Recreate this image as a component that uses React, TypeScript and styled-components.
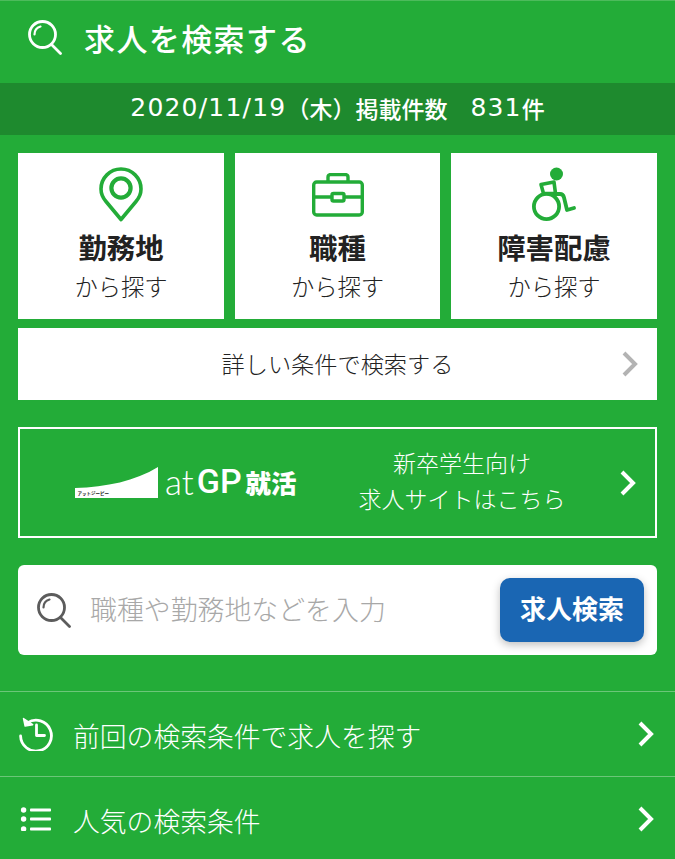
import React from 'react';
import styled, { createGlobalStyle } from 'styled-components';

const GlobalStyle = createGlobalStyle`
  html, body {
    margin: 0;
    padding: 0;
    background: #23ac38;
  }
  * {
    box-sizing: border-box;
  }
`;

const Page = styled.div`
  width: 675px;
  height: 859px;
  overflow: hidden;
  background: #23ac38;
  font-family: "Noto Sans CJK JP", "Noto Sans", sans-serif;
  color: #fff;
`;

const Header = styled.header`
  height: 83px;
  display: flex;
  align-items: center;
  gap: 21px;
  padding: 0 0 10px 27px;
  border-top: 1px solid #4dbb5c;
`;

const HeaderTitle = styled.h1`
  margin: 0;
  font-size: 31px;
  font-weight: 500;
  line-height: 1;
  letter-spacing: 1.4px;
`;

const DateBand = styled.div`
  height: 52px;
  padding-bottom: 3px;
  display: flex;
  align-items: center;
  justify-content: center;
  background: #1e8a2e;
  font-size: 23px;
  font-weight: 500;
  white-space: pre;
`;

const DateNum = styled.span`
  font-family: "DejaVu Sans", sans-serif;
  font-size: 25px;
  font-weight: 400;
  letter-spacing: 1.2px;
`;

const Main = styled.main`
  padding: 18px 18px 0;
`;

const CardRow = styled.div`
  display: grid;
  grid-template-columns: 206px 205px 206px;
  gap: 11px;
`;

const Card = styled.a`
  height: 166px;
  display: flex;
  flex-direction: column;
  align-items: center;
  padding-top: 14px;
  background: #fff;
  color: #222;
`;

const CardIcon = styled.div`
  height: 56px;
  display: flex;
  align-items: center;
  justify-content: center;
`;

const CardTitle = styled.div`
  margin-top: 4px;
  font-size: 28.4px;
  font-weight: 700;
  line-height: 40px;
`;

const CardSub = styled.div`
  font-size: 23.3px;
  font-weight: 300;
  line-height: 38px;
  color: #222;
`;

const DetailLink = styled.a`
  position: relative;
  height: 72px;
  margin-top: 9px;
  padding-bottom: 2px;
  display: flex;
  align-items: center;
  justify-content: center;
  background: #fff;
  color: #222;
  font-size: 23.2px;
  font-weight: 300;
`;

const Chevron = styled.svg<{ $right: number }>`
  position: absolute;
  right: ${({ $right }) => $right}px;
  top: 50%;
  transform: translateY(-50%);
`;

const Banner = styled.a`
  position: relative;
  height: 111px;
  margin-top: 27px;
  display: grid;
  grid-template-columns: 267px 240px;
  align-items: center;
  border: 2px solid #fff;
  padding-left: 55px;
`;

const Logo = styled.div`
  display: flex;
  align-items: flex-end;
  height: 32px;
  margin-bottom: 1px;
`;

const LogoAt = styled.span`
  margin-left: 7px;
  font-family: "Lato", sans-serif;
  font-size: 35px;
  font-weight: 300;
  line-height: 33px;
`;

const LogoGp = styled.span`
  margin-left: 3px;
  font-family: "Roboto", sans-serif;
  font-size: 34px;
  font-weight: 500;
  line-height: 33px;
`;

const LogoJa = styled.span`
  margin-left: 4px;
  font-size: 25.5px;
  font-weight: 900;
  line-height: 33px;
`;

const BannerText = styled.div`
  padding-bottom: 6px;
  text-align: center;
  font-size: 23px;
  font-weight: 300;
  line-height: 36px;
`;

const SearchBox = styled.form`
  height: 90px;
  margin-top: 27px;
  display: flex;
  align-items: center;
  padding: 0 13px 0 18px;
  background: #fff;
  border-radius: 6px;
`;

const Placeholder = styled.div`
  flex: 1;
  margin-left: 18px;
  padding-bottom: 4px;
  font-size: 26.9px;
  font-weight: 300;
  color: #a8a8a8;
  white-space: nowrap;
`;

const SearchButton = styled.button`
  width: 144px;
  height: 64px;
  padding: 0 0 5px;
  border: 0;
  border-radius: 10px;
  background: #1a66b3;
  color: #fff;
  font-family: inherit;
  font-size: 26px;
  font-weight: 700;
  box-shadow: 0 3px 8px rgba(0, 0, 0, 0.25);
`;

const MenuList = styled.nav`
  margin-top: 36px;
`;

const MenuItem = styled.a`
  position: relative;
  height: 85px;
  display: flex;
  align-items: center;
  gap: 17px;
  padding-left: 19px;
  border-top: 1px solid #6bc678;
  font-size: 26.8px;
  font-weight: 300;
`;

const MenuText = styled.span`
  padding-top: 2px;
`;

const MenuIcon = styled.div`
  width: 37px;
  display: flex;
`;

const SearchIcon = ({ color }: { color: string }) => (
  <svg width="36" height="36" viewBox="0 0 36 36" fill="none" stroke={color} strokeLinecap="round">
    <circle cx="15.5" cy="15.5" r="13" strokeWidth="2.8" />
    <path d="M7.5 15.5c0-4 2.5-7 6-8" strokeWidth="2.2" />
    <path d="M24.5 25.5l9 9" strokeWidth="2.8" />
  </svg>
);

const ChevronIcon = ({ color, right }: { color: string; right: number }) => (
  <Chevron $right={right} width="18" height="26" viewBox="0 0 18 26" fill="none" stroke={color} strokeWidth="4">
    <path d="M3 2l11 11L3 24" />
  </Chevron>
);

const PinIcon = () => (
  <svg width="44" height="56" viewBox="0 0 44 56" fill="none" stroke="#23ac38" strokeWidth="3.6">
    <path d="M22 52.5 7 34.5C3.8 30.8 2 26.8 2 22 2 11 11 2 22 2S42 11 42 22c0 4.8-1.8 8.8-5 12.5L22 52.5Z" strokeLinejoin="round" />
    <circle cx="22" cy="21" r="9.6" strokeWidth="4.2" />
  </svg>
);

const CaseIcon = () => (
  <svg width="52" height="44" viewBox="0 0 52 44" fill="none" stroke="#23ac38" strokeWidth="3.4" strokeLinejoin="round">
    <rect x="1.7" y="9" width="48.6" height="33" rx="3" />
    <path d="M16 9V4a2.4 2.4 0 0 1 2.4-2.4h15.2A2.4 2.4 0 0 1 36 4v5" />
    <path d="M1.7 24H20M32 24h18.3" />
    <rect x="20" y="20.5" width="12" height="7.5" rx="1.5" />
  </svg>
);

const WheelchairIcon = () => (
  <svg width="44" height="56" viewBox="0 0 44 56" fill="none" stroke="#23ac38" strokeLinecap="round" strokeLinejoin="round">
    <circle cx="24.5" cy="7" r="6.5" fill="#23ac38" stroke="none" />
    <path d="M9 17.5 22 15l1.5 11.5H11.5L9 17.5Z" strokeWidth="3.6" />
    <path d="M23.5 27H28c2.5 0 3.4 1 4 3.5L35 43l7-2" strokeWidth="3.8" />
    <circle cx="14.5" cy="39.5" r="12.6" strokeWidth="3.8" />
  </svg>
);

const HistoryIcon = () => (
  <svg width="35" height="34" viewBox="0 0 35 34" fill="none" stroke="#fff" strokeWidth="2.8" strokeLinecap="round" strokeLinejoin="round">
    <path d="M8.5 5.8A15.4 15.4 0 1 1 1.6 19" />
    <path d="M4.5 1.5l1.6 7.6 7.6-1.4Z" fill="#fff" strokeWidth="1.4" />
    <path d="M17.5 8v10.5h8" />
  </svg>
);

const ListIcon = () => (
  <svg width="32" height="24" viewBox="0 0 32 24" fill="#fff">
    <circle cx="4.6" cy="3" r="2.7" />
    <circle cx="4.6" cy="12" r="2.7" />
    <circle cx="4.6" cy="22" r="2.7" />
    <rect x="11" y="1.5" width="21" height="3" rx="0.8" />
    <rect x="11" y="10.5" width="21" height="3" rx="0.8" />
    <rect x="11" y="20.5" width="21" height="3" rx="0.8" />
  </svg>
);

const LogoMark = () => (
  <svg width="83" height="31" viewBox="0 0 83 31">
    <path d="M0 31V21C32 20 60 14 83 0V31Z" fill="#fff" />
    <text x="2.5" y="27.5" fontSize="4.5" fontWeight="700" fill="#222" fontFamily="'Noto Sans CJK JP', sans-serif">アットジーピー</text>
  </svg>
);

const cards = [
  { icon: <PinIcon />, title: '勤務地' },
  { icon: <CaseIcon />, title: '職種' },
  { icon: <WheelchairIcon />, title: '障害配慮' },
];

export default function App() {
  return (
    <Page>
      <GlobalStyle />
      <Header>
        <SearchIcon color="#fff" />
        <HeaderTitle>求人を検索する</HeaderTitle>
      </Header>
      <DateBand>
        <DateNum>2020/11/19</DateNum>（木）掲載件数　<DateNum>831</DateNum>件
      </DateBand>
      <Main>
        <CardRow>
          {cards.map((card) => (
            <Card key={card.title}>
              <CardIcon>{card.icon}</CardIcon>
              <CardTitle>{card.title}</CardTitle>
              <CardSub>から探す</CardSub>
            </Card>
          ))}
        </CardRow>
        <DetailLink>
          詳しい条件で検索する
          <ChevronIcon color="#b3b3b3" right={18} />
        </DetailLink>
        <Banner>
          <Logo>
            <LogoMark />
            <LogoAt>at</LogoAt>
            <LogoGp>GP</LogoGp>
            <LogoJa>就活</LogoJa>
          </Logo>
          <BannerText>
            新卒学生向け
            <br />
            求人サイトはこちら
          </BannerText>
          <ChevronIcon color="#fff" right={18} />
        </Banner>
        <SearchBox>
          <SearchIcon color="#5c5c5c" />
          <Placeholder>職種や勤務地などを入力</Placeholder>
          <SearchButton type="button">求人検索</SearchButton>
        </SearchBox>
      </Main>
      <MenuList>
        <MenuItem>
          <MenuIcon><HistoryIcon /></MenuIcon>
          <MenuText>前回の検索条件で求人を探す</MenuText>
          <ChevronIcon color="#fff" right={20} />
        </MenuItem>
        <MenuItem>
          <MenuIcon><ListIcon /></MenuIcon>
          <MenuText>人気の検索条件</MenuText>
          <ChevronIcon color="#fff" right={20} />
        </MenuItem>
      </MenuList>
    </Page>
  );
}
